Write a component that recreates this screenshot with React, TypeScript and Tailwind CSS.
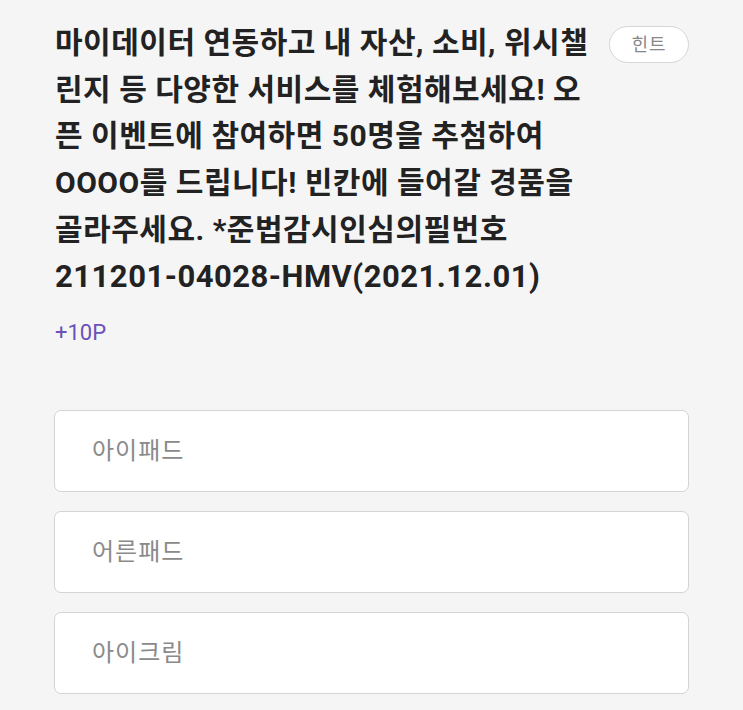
const lines = [
  '마이데이터 연동하고 내 자산, 소비, 위시챌',
  '린지 등 다양한 서비스를 체험해보세요! 오',
  '픈 이벤트에 참여하면 50명을 추첨하여',
  'OOOO를 드립니다! 빈칸에 들어갈 경품을',
  '골라주세요. *준법감시인심의필번호',
];

const options = ['아이패드', '어른패드', '아이크림'];

export default function App() {
  return (
    <div
      className="min-h-screen w-[743px] h-[710px] overflow-hidden bg-[#f5f5f5]"
      style={{ fontFamily: '"Roboto", "Noto Sans CJK KR", sans-serif' }}
    >
      <div className="flex items-start pl-[55px] pr-[54px] pt-[20px]">
        <h2 className="flex-1 text-[30px] leading-[46.7px] font-bold text-[#222] tracking-[0.5px]">
          {lines.map((l, i) => (
            <div key={i} className="whitespace-nowrap">{l}</div>
          ))}
          <div className="whitespace-nowrap text-[31px]">211201-04028-HMV(2021.12.01)</div>
        </h2>
        <button className="mt-[6px] h-[37px] w-[80px] rounded-full border border-[#d6d6d6] bg-white text-[18px] text-[#888] tracking-[1px]">
          힌트
        </button>
      </div>
      <div className="pl-[55px] mt-[19px] text-[22px] leading-[28px] text-[#6b51b8]">+10P</div>
      <div className="flex flex-col gap-[19px] pl-[54px] pr-[54px] mt-[63px]">
        {options.map((o) => (
          <div
            key={o}
            className="h-[82px] flex items-center rounded-[7px] border border-[#d4d4d4] bg-white pl-[37px] text-[24px] text-[#8a8a8a] tracking-[1px]"
          >
            {o}
          </div>
        ))}
      </div>
    </div>
  );
}
